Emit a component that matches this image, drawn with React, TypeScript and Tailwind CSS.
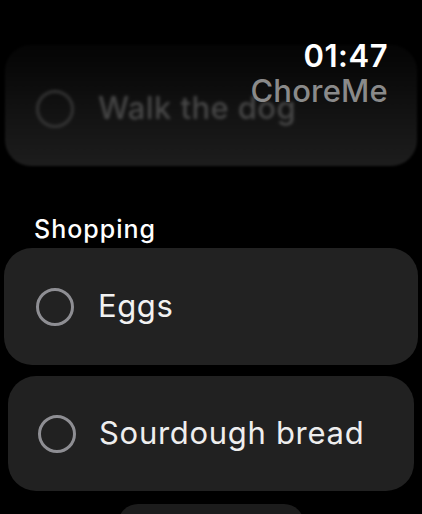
import React from 'react';

const font = { fontFamily: 'Inter, "Noto Sans", sans-serif' };

const Circle = ({ className = '' }: { className?: string }) => (
  <span className={`block w-[38px] h-[38px] rounded-full border-[3px] shrink-0 ${className}`} />
);

export default function App() {
  return (
    <div className="relative w-[422px] h-[514px] overflow-hidden bg-black text-white" style={font}>
      <div className="flex flex-col">
        <div className="mt-[45px] mx-[5px] h-[121px] rounded-[26px] bg-gradient-to-b from-[#050505] via-[#111111] to-[#1d1d1d] flex items-center pl-[31px] pt-[6px] blur-[1px]">
          <div className="flex items-center gap-[24px] opacity-75 blur-[0.8px]">
            <Circle className="border-[#404040]" />
            <span className="text-[31px] font-medium text-[#5a5a5a] tracking-[0.4px]">Walk the dog</span>
          </div>
        </div>

        <h2 className="mt-[47px] ml-[34px] text-[25px] leading-[32px] font-medium tracking-[1px]">Shopping</h2>

        <div className="mt-[3px] mx-[4px] h-[117px] rounded-[28px] bg-[#222222] flex items-center pl-[32px] gap-[24px]">
          <Circle className="border-[#8e8e93]" />
          <span className="text-[31px] font-normal tracking-[0.6px] text-[#f2f2f2]">Eggs</span>
        </div>

        <div className="mt-[11px] mx-[8px] h-[115px] rounded-[28px] bg-[#212121] flex items-center pl-[30px] gap-[23px]">
          <Circle className="border-[#8e8e93]" />
          <span className="text-[31px] font-normal tracking-[0.7px] text-[#eeeeee]">Sourdough bread</span>
        </div>

        <div className="mt-[13px] mx-auto w-[186px] h-[40px] rounded-[20px] bg-[#1c1c1c]" />
      </div>

      <div className="absolute top-0 left-0 right-0 h-[48px] bg-gradient-to-b from-black via-black to-transparent" />

      <div className="absolute top-[38px] right-[34px] flex flex-col items-end">
        <span className="text-[31px] leading-[36px] font-semibold tracking-[0.5px]">01:47</span>
        <span className="text-[31px] leading-[36px] font-medium text-[#8a8a8a] tracking-[0.2px] -mt-[1px]">ChoreMe</span>
      </div>
    </div>
  );
}
